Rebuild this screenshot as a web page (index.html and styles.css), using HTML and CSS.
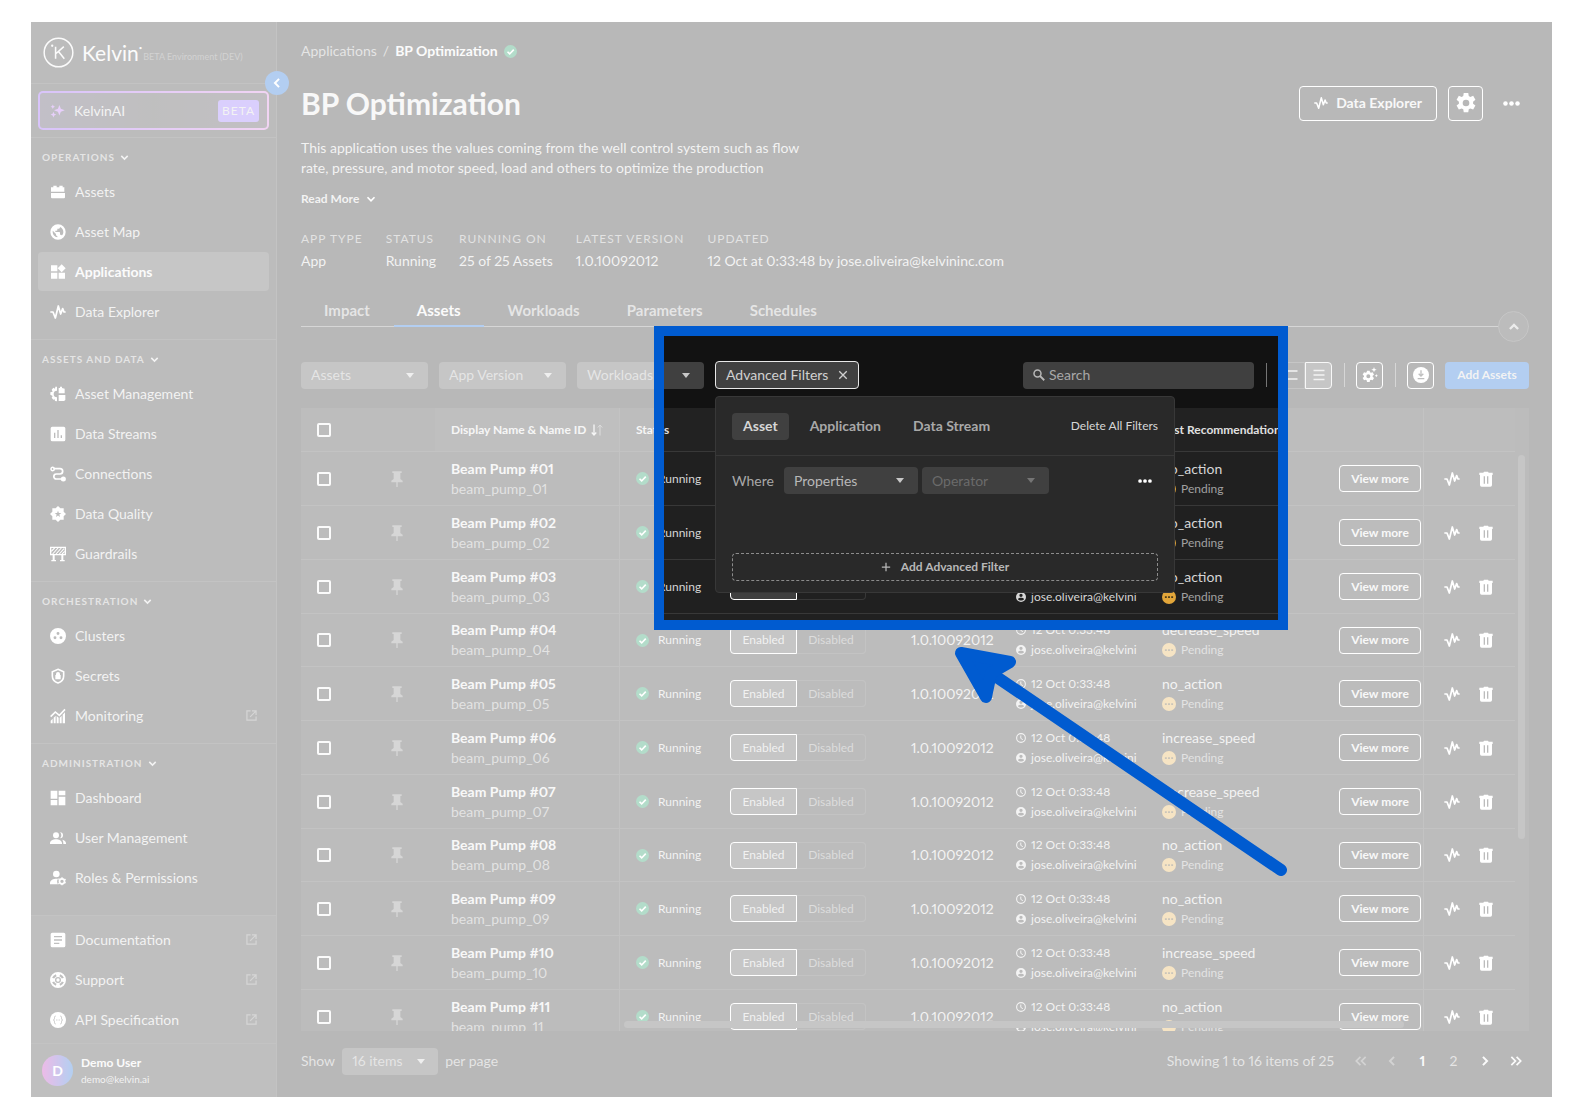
FILE: index.html
```
<!DOCTYPE html>
<html lang="en">
<head>
    <meta charset="UTF-8">
    <meta name="viewport" content="width=device-width, initial-scale=1.0">
    <link rel="stylesheet" href="styles.css">
    <title>BP Optimization - Kelvin</title>
</head>
<body>
    <!-- icon sprite -->
    <svg class="sprite" aria-hidden="true">
        <symbol id="down" viewBox="0 0 24 24"><path d="M5 8.5l7 7 7-7" fill="none" stroke="currentColor" stroke-width="3.4"/></symbol>
        <symbol id="left" viewBox="0 0 24 24"><path d="M15.5 5l-7 7 7 7" fill="none" stroke="currentColor" stroke-width="3.4"/></symbol>
        <symbol id="right" viewBox="0 0 24 24"><path d="M8.5 5l7 7-7 7" fill="none" stroke="currentColor" stroke-width="3.4"/></symbol>
        <symbol id="first" viewBox="0 0 24 24"><path d="M11 5l-7 7 7 7M20 5l-7 7 7 7" fill="none" stroke="currentColor" stroke-width="3"/></symbol>
        <symbol id="last" viewBox="0 0 24 24"><path d="M4 5l7 7-7 7M13 5l7 7-7 7" fill="none" stroke="currentColor" stroke-width="3"/></symbol>
        <symbol id="up" viewBox="0 0 24 24"><path d="M5 15.5l7-7 7 7" fill="none" stroke="currentColor" stroke-width="4"/></symbol>
        <symbol id="sparkle" viewBox="0 0 24 24"><path d="M15 3l2.3 6.200L23.500 11.500l-6.200 2.300L15 20l-2.300-6.200L6.500 11.500l6.200-2.300zM4.500 2.500l1.100 2.400L8 6 5.600 7.100 4.500 9.500 3.400 7.100 1 6l2.400-1.100zM5.500 14l1.400 3.100L10 18.500l-3.100 1.400L5.500 23l-1.400-3.100L1 18.500l3.100-1.400z"/></symbol>
        <symbol id="assets" viewBox="0 0 24 24"><path d="M3 5h2V2.500h5V5h4V2.500h5V5h2.500v6.500h-20V5zM1.500 13.500h21V20a1.500 1.500 0 0 1-1.500 1.500H3A1.500 1.500 0 0 1 1.500 20z"/></symbol>
        <symbol id="map" viewBox="0 0 24 24"><path d="M17.900,17.390C17.640,16.590 16.890,16 16,16H15V13A1,1 0 0,0 14,12H8V10H10A1,1 0 0,0 11,9V7H13A2,2 0 0,0 15,5V4.590C17.930,5.770 20,8.640 20,12C20,14.080 19.200,15.970 17.900,17.390M11,19.930C7.050,19.440 4,16.080 4,12C4,11.380 4.080,10.780 4.210,10.210L9,15V16A2,2 0 0,0 11,18M12,0.500A11.500,11.500 0 0,0 0.500,12A11.500,11.500 0 0,0 12,23.500A11.500,11.500 0 0,0 23.500,12A11.500,11.500 0 0,0 12,0.500Z"/></symbol>
        <symbol id="apps" viewBox="0 0 24 24"><path d="M1.500 2H11v9H1.500zM1.500 13H11v9H1.500zM13 13h9.500v9H13zM17.500.500l6 6-6 6-6-6z"/></symbol>
        <symbol id="pulse" viewBox="0 0 24 24"><path d="M.500 12h4L8 21 12.500 3 16 15l3-8 2 5h2.500" fill="none" stroke="currentColor" stroke-width="2.600" stroke-linejoin="round"/></symbol>
        <symbol id="manage" viewBox="0 0 24 24"><path d="M10.500 1v6a5 5 0 0 0 0 10v6l-3-.500-.500-2.500-2 .500-2.500-3 1.500-2.500L.500 13v-3.500L4 8.500 2.500 5.500l2.500-3 2.500 1.500L8 1zM13 3h2V1h3v2l4 1v7h-9zM13 13.500h10V21l-2 1.500h-8z"/></symbol>
        <symbol id="streams" viewBox="0 0 24 24"><path fill-rule="evenodd" d="M3.500 1h17A2.500 2.500 0 0 1 23 3.500v17a2.500 2.500 0 0 1-2.500 2.500h-17A2.500 2.500 0 0 1 1 20.500v-17A2.500 2.500 0 0 1 3.500 1zM6 10v8h2v-8zM11 6v12h2V6zM16 14v4h2v-4z"/></symbol>
        <symbol id="connections" viewBox="0 0 24 24"><path d="M5 4h10a4 4 0 0 1 0 8H9.500a3.500 3.500 0 0 0 0 7.500H20" fill="none" stroke="currentColor" stroke-width="2.600"/><circle cx="4" cy="4.500" r="2.500" fill="none" stroke="currentColor" stroke-width="2.200"/><circle cx="20" cy="19.500" r="3.800"/></symbol>
        <symbol id="quality" viewBox="0 0 24 24"><path fill-rule="evenodd" d="M12 0l3.500 3.500H20.500V8.500L24 12l-3.500 3.500v5h-5L12 24l-3.500-3.500h-5v-5L0 12l3.500-3.500v-5h5zM12 7l-1.300 3.500H7l3 2.200L9 16.500l3-2.200 3 2.200-1-3.800 3-2.200h-3.700z"/></symbol>
        <symbol id="guard" viewBox="0 0 24 24"><path d="M1 2h22v11H1z" fill="none" stroke="currentColor" stroke-width="2"/><path d="M4 12L12 3M9 12l8-9M14 12l7-8M2 8l5-5M18 12l4-4" fill="none" stroke="currentColor" stroke-width="1.600"/><path d="M4 13h3v8h2v2H2v-2h2zM17 13h3v8h2v2h-7v-2h2z"/></symbol>
        <symbol id="clusters" viewBox="0 0 24 24"><path fill-rule="evenodd" d="M12 0a12 12 0 1 0 0 24 12 12 0 0 0 0-24zM12 6a2.200 2.200 0 1 1 0 4.400A2.200 2.200 0 0 1 12 6zM7.500 12.500a2.200 2.200 0 1 1 0 4.400 2.200 2.200 0 0 1 0-4.400zM16.500 12.500a2.200 2.200 0 1 1 0 4.400 2.200 2.200 0 0 1 0-4.400z"/></symbol>
        <symbol id="secrets" viewBox="0 0 24 24"><path d="M12 2l8.500 3.500V12c0 5-4 9-8.500 10.500C7.500 21 3.500 17 3.500 12V5.500z" fill="none" stroke="currentColor" stroke-width="2.400"/><path d="M8 10.500h1V9a3 3 0 0 1 6 0v1.500h1V17H8z"/></symbol>
        <symbol id="monitoring" viewBox="0 0 24 24"><path d="M1 13l7-7 6 5 8.500-9" fill="none" stroke="currentColor" stroke-width="2.400"/><path d="M1 19l3-3v7H1zM5.500 14.500l3-3V23h-3zM10 12l3 2.500V23h-3zM14.500 14.500l3-3V23h-3zM19 10l3.500-3.500V23H19z"/></symbol>
        <symbol id="ext" viewBox="0 0 24 24"><path d="M10 2H2v20h20v-8M13 2h9v9M21 3L9 15" fill="none" stroke="currentColor" stroke-width="2.600"/></symbol>
        <symbol id="dashboard" viewBox="0 0 24 24"><path d="M1 1h10v12H1zM1 15h10v8H1zM13 1h10v7H13zM13 10h10v13H13z"/></symbol>
        <symbol id="users" viewBox="0 0 24 24"><circle cx="9" cy="8" r="4.500"/><path d="M0 20c0-4 5-6 9-6s9 2 9 6v1H0zM15 3.500a4.500 4.500 0 0 1 0 9 6 6 0 0 0 0-9zM18.500 14.500c3 .500 5.500 2.500 5.500 5.500v1h-4v-1c0-2-.500-4-1.500-5.500z"/></symbol>
        <symbol id="roles" viewBox="0 0 24 24"><circle cx="9.500" cy="6" r="5"/><path d="M0 20c0-5 5-7 10-7 1 0 1.500 0 2 .200-2 3-1.500 6 0 8.300H0z"/><circle cx="18" cy="17" r="3.800" fill="none" stroke="currentColor" stroke-width="2.600"/><path d="M17 11h2v2h-2zM17 21h2v2h-2zM12 14l1-1.700 1.700 1-1 1.700zM21.300 19.300l1-1.700 1.700 1-1 1.700zM12 20l1.700-1 1 1.700-1.700 1zM21.300 14l1.700-1 1 1.700-1.700 1z"/></symbol>
        <symbol id="docs" viewBox="0 0 24 24"><path fill-rule="evenodd" d="M3.500 1h17A2.500 2.500 0 0 1 23 3.500v17a2.500 2.500 0 0 1-2.500 2.500h-17A2.500 2.500 0 0 1 1 20.500v-17A2.500 2.500 0 0 1 3.500 1zM6 6v2h12V6zM6 11v2h12v-2zM6 16v2h8v-2z"/></symbol>
        <symbol id="support" viewBox="0 0 24 24"><path fill-rule="evenodd" d="M12 0a12 12 0 1 0 0 24 12 12 0 0 0 0-24zM12 7.500a4.500 4.500 0 1 1 0 9 4.500 4.500 0 0 1 0-9zM8.600 3.200l1.300 3A6.500 6.500 0 0 0 6.200 9.900l-3-1.300a9.500 9.500 0 0 1 5.400-5.400zM15.400 3.200a9.500 9.500 0 0 1 5.400 5.400l-3 1.300a6.500 6.500 0 0 0-3.700-3.700zM3.200 15.400l3-1.300a6.500 6.500 0 0 0 3.700 3.700l-1.300 3a9.500 9.500 0 0 1-5.400-5.400zM17.800 14.100l3 1.300a9.500 9.500 0 0 1-5.400 5.400l-1.300-3a6.500 6.500 0 0 0 3.700-3.700z"/><circle cx="12" cy="12" r="2.500"/></symbol>
        <symbol id="api" viewBox="0 0 24 24"><circle cx="12" cy="12" r="12"/><path d="M8.500 6C6 6 7 10 6.500 11L5 12l1.500 1c.500 1-.500 5 2 5M15.500 6c2.500 0 1.500 4 2 5l1.500 1-1.500 1c-.500 1 .500 5-2 5M9 12h1.200M11.400 12h1.200M13.800 12H15" fill="none" stroke="#2b2b2b" stroke-width="1.300"/></symbol>
        <symbol id="check" viewBox="0 0 24 24"><circle cx="12" cy="12" r="12" fill="#038b4d"/><path d="M6.500 12.500l4 4 7.500-8" fill="none" stroke="#fff" stroke-width="3"/></symbol>
        <symbol id="cog" viewBox="0 0 24 24"><path fill-rule="evenodd" d="M9.300 0h5.400l.600 3.600 1.900 1.100 3.400-1.300 2.700 4.700-2.800 2.300v2.400l2.800 2.300-2.700 4.700-3.400-1.300-1.900 1.100-.600 3.600H9.300l-.600-3.600-1.900-1.100-3.400 1.300L.700 15.100l2.800-2.300v-2.400L.700 8.100l2.700-4.700 3.400 1.300 1.900-1.100zM12 8a4 4 0 1 0 0 8 4 4 0 0 0 0-8z"/></symbol>
        <symbol id="cogplus" viewBox="0 0 24 24"><path fill-rule="evenodd" d="M7.500 5.500h4l.500 2.500 1.500.800 2.500-.800 2 3.500-2 1.700v1.600l2 1.700-2 3.500-2.500-.800-1.500.800-.500 2.500h-4L7 20l-1.500-.800L3 20l-2-3.500 2-1.700v-1.600l-2-1.700L3 8l2.500.800L7 8zM9.500 11a3 3 0 1 0 0 6 3 3 0 0 0 0-6zM18 0l1.100 2.900L22 4l-2.900 1.100L18 8l-1.100-2.900L14 4l2.900-1.100zM21.500 10.500l.800 1.700 1.700.800-1.700.800-.800 1.700-.800-1.700L19 13l1.700-.800z"/></symbol>
        <symbol id="download" viewBox="0 0 24 24"><circle cx="12" cy="12" r="12"/><path d="M12 5v8M8.500 10l3.500 3.500L15.500 10M7 17.500h10" fill="none" stroke="#2b2b2b" stroke-width="2"/></symbol>
        <symbol id="dots" viewBox="0 0 24 24"><circle cx="3.500" cy="12" r="3.200"/><circle cx="12" cy="12" r="3.200"/><circle cx="20.500" cy="12" r="3.200"/></symbol>
        <symbol id="close" viewBox="0 0 24 24"><path d="M3 3l18 18M21 3L3 21" fill="none" stroke="currentColor" stroke-width="3.200"/></symbol>
        <symbol id="plus" viewBox="0 0 24 24"><path d="M12 2v20M2 12h20" fill="none" stroke="currentColor" stroke-width="3"/></symbol>
        <symbol id="search" viewBox="0 0 24 24"><circle cx="9" cy="9" r="7" fill="none" stroke="currentColor" stroke-width="3"/><path d="M14 14l8.500 8.500" fill="none" stroke="currentColor" stroke-width="3.600"/></symbol>
        <symbol id="rows2" viewBox="0 0 24 24"><path d="M1 4h22M1 20h22" fill="none" stroke="currentColor" stroke-width="3"/></symbol>
        <symbol id="rows3" viewBox="0 0 24 24"><path d="M1 3h22M1 12h22M1 21h22" fill="none" stroke="currentColor" stroke-width="2.600"/></symbol>
        <symbol id="sort" viewBox="0 0 24 24"><path d="M6 1v20M1.500 17L6 22l4.500-5" fill="none" stroke="currentColor" stroke-width="2.600"/><path d="M18 23V3M13.500 7L18 2l4.500 5" fill="none" stroke="#8a8a8a" stroke-width="2"/></symbol>
        <symbol id="pin" viewBox="0 0 24 24"><path d="M17 12V3h2V.500H5V3h2v9l-3.500 2.500V17H11v7h2v-7h7.500v-2.500z"/></symbol>
        <symbol id="clock" viewBox="0 0 24 24"><circle cx="12" cy="12" r="10.500" fill="none" stroke="currentColor" stroke-width="2.600"/><path d="M11.500 6v7l5 3" fill="none" stroke="currentColor" stroke-width="2.400"/></symbol>
        <symbol id="person" viewBox="0 0 24 24"><path fill-rule="evenodd" d="M12 0a12 12 0 1 0 0 24 12 12 0 0 0 0-24zM12 4a4 4 0 1 1 0 8 4 4 0 0 1 0-8zM4.500 16.500c1-2 5-3 7.500-3s6.500 1 7.500 3c-3 5.500-12 5.500-15 0z"/></symbol>
        <symbol id="pending" viewBox="0 0 24 24"><circle cx="12" cy="12" r="12" fill="#e2a63a"/><path d="M5 10.500h3.200v3H5zM10.400 10.500h3.200v3h-3.200zM15.800 10.500H19v3h-3.200z" fill="#4a3a1a"/></symbol>
        <symbol id="trash" viewBox="0 0 24 24"><path fill-rule="evenodd" d="M2 2.500h6L9 1h6l1 1.500h6V6h-1v15a2.500 2.500 0 0 1-2.500 2.500h-13A2.500 2.500 0 0 1 3 21V6H2zM8.500 8v11h2V8zM13.500 8v11h2V8z"/></symbol>
        <symbol id="logo" viewBox="0 0 32 32"><circle cx="16" cy="16" r="14.800" fill="none" stroke="currentColor" stroke-width="1.500"/><path d="M13 10v12.500M21.500 10L13.500 17M16 15l6 7.500" fill="none" stroke="currentColor" stroke-width="1.600"/><circle cx="9.500" cy="9" r="1.200"/></symbol>
    </svg>

    <div class="app">
        <aside class="sidebar">
            <div class="brand">
                <svg class="logo"><use href="#logo"/></svg>
                <span class="brand-name">Kelvin<sup>•</sup></span>
                <span class="env">BETA Environment (DEV)</span>
                <button class="collapse" aria-label="Collapse menu"><svg><use href="#left"/></svg></button>
            </div>
            <div class="ai">
                <button class="ai-btn"><svg><use href="#sparkle"/></svg><span>KelvinAI</span><span class="beta">BETA</span></button>
            </div>
            <nav class="group">
                <h2>Operations <svg><use href="#down"/></svg></h2>
                <a class="item" href="#"><svg><use href="#assets"/></svg>Assets</a>
                <a class="item" href="#"><svg><use href="#map"/></svg>Asset Map</a>
                <a class="item active" href="#"><svg><use href="#apps"/></svg>Applications</a>
                <a class="item" href="#"><svg><use href="#pulse"/></svg>Data Explorer</a>
            </nav>
            <nav class="group">
                <h2>Assets and Data <svg><use href="#down"/></svg></h2>
                <a class="item" href="#"><svg><use href="#manage"/></svg>Asset Management</a>
                <a class="item" href="#"><svg><use href="#streams"/></svg>Data Streams</a>
                <a class="item" href="#"><svg><use href="#connections"/></svg>Connections</a>
                <a class="item" href="#"><svg><use href="#quality"/></svg>Data Quality</a>
                <a class="item" href="#"><svg><use href="#guard"/></svg>Guardrails</a>
            </nav>
            <nav class="group">
                <h2>Orchestration <svg><use href="#down"/></svg></h2>
                <a class="item" href="#"><svg><use href="#clusters"/></svg>Clusters</a>
                <a class="item" href="#"><svg><use href="#secrets"/></svg>Secrets</a>
                <a class="item" href="#"><svg><use href="#monitoring"/></svg>Monitoring<svg class="ext"><use href="#ext"/></svg></a>
            </nav>
            <nav class="group grow">
                <h2>Administration <svg><use href="#down"/></svg></h2>
                <a class="item" href="#"><svg><use href="#dashboard"/></svg>Dashboard</a>
                <a class="item" href="#"><svg><use href="#users"/></svg>User Management</a>
                <a class="item" href="#"><svg><use href="#roles"/></svg>Roles &amp; Permissions</a>
            </nav>
            <nav class="links">
                <a class="item" href="#"><svg><use href="#docs"/></svg>Documentation<svg class="ext"><use href="#ext"/></svg></a>
                <a class="item" href="#"><svg><use href="#support"/></svg>Support<svg class="ext"><use href="#ext"/></svg></a>
                <a class="item" href="#"><svg><use href="#api"/></svg>API Specification<svg class="ext"><use href="#ext"/></svg></a>
            </nav>
            <div class="user">
                <span class="avatar">D</span>
                <div><p class="user-name">Demo User</p><p class="user-mail">demo@kelvin.ai</p></div>
            </div>
        </aside>

        <main class="main">
            <div class="crumbs"><a href="#">Applications</a><span>/</span><b>BP Optimization</b><svg><use href="#check"/></svg></div>
            <header class="head">
                <h1>BP Optimization</h1>
                <div class="head-actions">
                    <button class="outline explorer"><svg><use href="#pulse"/></svg>Data Explorer</button>
                    <button class="outline gear" aria-label="Settings"><svg><use href="#cog"/></svg></button>
                    <button class="plain more" aria-label="More"><svg><use href="#dots"/></svg></button>
                </div>
            </header>
            <p class="desc">This application uses the values coming from the well control system such as flow rate, pressure, and motor speed, load and others to optimize the production</p>
            <button class="plain read-more">Read More <svg><use href="#down"/></svg></button>
            <dl class="facts">
                <div><dt>App Type</dt><dd>App</dd></div>
                <div><dt>Status</dt><dd>Running</dd></div>
                <div><dt>Running On</dt><dd>25 of 25 Assets</dd></div>
                <div><dt>Latest Version</dt><dd>1.0.10092012</dd></div>
                <div><dt>Updated</dt><dd>12 Oct at 0:33:48 by jose.oliveira@kelvininc.com</dd></div>
            </dl>
            <div class="tabs">
                <button>Impact</button><button class="active">Assets</button><button>Workloads</button><button>Parameters</button><button>Schedules</button>
                <button class="fold" aria-label="Collapse header"><svg><use href="#up"/></svg></button>
            </div>

            <div class="toolbar">
                <span class="select"><select aria-label="Assets"><option>Assets</option></select></span>
                <span class="select"><select aria-label="App Version"><option>App Version</option></select></span>
                <span class="select"><select aria-label="Workloads"><option>Workloads</option></select></span>
                <div class="advanced">
                    <button class="adv-btn">Advanced Filters <svg><use href="#close"/></svg></button>
                    <div class="popover">
                        <div class="pop-head">
                            <button class="pill active">Asset</button><button class="pill">Application</button><button class="pill">Data Stream</button>
                            <button class="plain delete">Delete All Filters</button>
                        </div>
                        <div class="pop-body">
                            <div class="where">
                                <label for="prop">Where</label>
                                <span class="select prop"><select id="prop"><option>Properties</option></select></span>
                                <span class="select off"><select aria-label="Operator" disabled><option>Operator</option></select></span>
                                <button class="plain row-more" aria-label="Filter options"><svg><use href="#dots"/></svg></button>
                            </div>
                            <button class="add-filter"><svg><use href="#plus"/></svg>Add Advanced Filter</button>
                        </div>
                    </div>
                </div>
                <label class="search"><svg><use href="#search"/></svg><input type="text" placeholder="Search" aria-label="Search"></label>
                <i class="sep"></i>
                <div class="density"><button aria-label="Comfortable"><svg><use href="#rows2"/></svg></button><button class="on" aria-label="Compact"><svg><use href="#rows3"/></svg></button></div>
                <i class="sep"></i>
                <button class="outline tool" aria-label="Table settings"><svg><use href="#cogplus"/></svg></button>
                <i class="sep"></i>
                <button class="outline tool" aria-label="Download"><svg><use href="#download"/></svg></button>
                <button class="primary">Add Assets</button>
            </div>

            <div class="table-wrap">
                <table>
                    <thead>
                        <tr>
                            <th class="c-check"><input type="checkbox" aria-label="Select all"></th>
                            <th class="c-pin"></th>
                            <th class="c-name">Display Name &amp; Name ID <svg><use href="#sort"/></svg></th>
                            <th class="c-status">Status</th>
                            <th class="c-state"></th>
                            <th class="c-version"></th>
                            <th class="c-updated"></th>
                            <th class="c-rec">Last Recommendation</th>
                            <th class="c-view"></th>
                            <th class="c-act"></th>
                        </tr>
                    </thead>
                    <tbody id="rows"></tbody>
                </table>
                <i class="bar-v"></i><i class="bar-h"></i>
            </div>

            <footer class="pager">
                <label for="size">Show</label>
                <span class="select size"><select id="size"><option>16 items</option></select></span>
                <span>per page</span>
                <span class="count">Showing 1 to 16 items of 25</span>
                <div class="pages">
                    <button class="dim" aria-label="First page"><svg><use href="#first"/></svg></button>
                    <button class="dim" aria-label="Previous page"><svg><use href="#left"/></svg></button>
                    <button class="on">1</button>
                    <button>2</button>
                    <button class="on" aria-label="Next page"><svg><use href="#right"/></svg></button>
                    <button class="on" aria-label="Last page"><svg><use href="#last"/></svg></button>
                </div>
            </footer>
        </main>

        <!-- highlight: everything outside the frame is washed out -->
        <div class="spotlight"></div>
        <svg class="arrow" viewBox="0 0 340 236" aria-hidden="true">
            <path d="M32 22L331 225" fill="none" stroke="#005bd0" stroke-width="12" stroke-linecap="round"/>
            <path d="M11 8L60 17 41 28 36 52z" fill="#005bd0" stroke="#005bd0" stroke-width="12" stroke-linejoin="round"/>
        </svg>
    </div>

    <script>
        const actions = ["no_action", "no_action", "no_action", "decrease_speed", "no_action", "increase_speed", "decrease_speed", "no_action", "no_action", "increase_speed", "no_action"];
        const icon = (name, cls = "") => `<svg class="${cls}"><use href="#${name}"/></svg>`;
        document.getElementById("rows").innerHTML = actions.map((action, i) => {
            const n = String(i + 1).padStart(2, "0");
            return `<tr>
                <td class="c-check"><input type="checkbox" aria-label="Select Beam Pump #${n}"></td>
                <td class="c-pin">${icon("pin")}</td>
                <td class="c-name"><b>Beam Pump #${n}</b><span>beam_pump_${n}</span></td>
                <td class="c-status"><div>${icon("check")}Running</div></td>
                <td class="c-state"><div class="toggle"><button class="on">Enabled</button><button>Disabled</button></div></td>
                <td class="c-version">1.0.10092012</td>
                <td class="c-updated"><div>${icon("clock")}12 Oct 0:33:48</div><div>${icon("person")}jose.oliveira@kelvini</div></td>
                <td class="c-rec"><span>${action}</span><div>${icon("pending")}Pending</div></td>
                <td class="c-view"><button class="outline">View more</button></td>
                <td class="c-act"><div><button class="plain" aria-label="Open in Data Explorer">${icon("pulse")}</button><button class="plain" aria-label="Delete">${icon("trash")}</button></div></td>
            </tr>`;
        }).join("");
    </script>
</body>
</html>
```
FILE: styles.css
```
*{ box-sizing: border-box; }
body{ margin: 0; height: 100vh; min-height: 1120px; padding: 22px 32px 23px 31px; background: #fff; color: #d6d6d6; font-family: Lato, "Open Sans", sans-serif; font-size: 14px; line-height: 20px; font-variant-numeric: proportional-nums; }
h1, h2, p, dl, dd{ margin: 0; }
a{ color: inherit; text-decoration: none; }
button, input, select{ font: inherit; color: inherit; margin: 0; }
button{ padding: 0; border: 0; background: none; }
svg{ display: block; flex: none; fill: currentColor; }
.sprite{ position: absolute; width: 0; height: 0; }
.app{ position: relative; overflow: hidden; display: flex; height: 100%; background: #121212; }

/* sidebar */
.sidebar{ display: flex; flex-direction: column; flex: none; width: 246px; background: #202020; border-right: 1px solid #383838; }
.brand{ position: relative; display: flex; align-items: center; height: 61px; padding-left: 12px; color: #f2f2f2; }
.logo{ width: 31px; height: 31px; }
.brand-name{ margin-left: 8px; font-size: 21px; line-height: 24px; }
.brand-name sup{ font-size: 6px; line-height: 0; vertical-align: 11px; }
.env{ margin-left: 1px; padding-top: 8px; font-size: 9px; line-height: 12px; color: #6b6b6b; white-space: nowrap; }
.collapse{ position: absolute; z-index: 2; right: -13px; bottom: -12px; width: 24px; height: 24px; border-radius: 50%; background: #005bd0; color: #fff; }
.collapse svg{ width: 14px; height: 14px; margin: auto; }
.ai{ padding: 7px; border-top: 1px solid #383838; }
.ai-btn{ display: flex; align-items: center; width: 231px; height: 39px; padding: 0 8px 0 10px; border: 2px solid transparent; border-radius: 5px; background: linear-gradient(90deg, #322a45, #2b2b2b 50%, #322a38) padding-box, linear-gradient(90deg, #7d3aed, #d070d8) border-box; }
.ai-btn svg{ width: 15px; height: 15px; color: #b060f0; margin-right: 9px; }
.beta{ margin-left: auto; width: 41px; border-radius: 3px; background: #845ff8; font-size: 12px; line-height: 22px; letter-spacing: 1px; }
.group{ padding: 11px 7px 7px; border-top: 1px solid #383838; }
.grow{ flex: 1; }
.group h2{ display: flex; align-items: center; gap: 4px; height: 16px; margin: 0 0 7px 4px; font-size: 10px; line-height: 16px; font-weight: 700; letter-spacing: 1px; text-transform: uppercase; color: #a8a8a8; }
.group h2 svg{ width: 11px; height: 11px; color: #d6d6d6; }
.item{ display: flex; align-items: center; gap: 9px; height: 39px; margin-bottom: 1px; padding: 0 12px; border-radius: 4px; }
.item svg{ width: 16px; height: 16px; color: #fff; }
.item .ext{ width: 11px; height: 11px; margin-left: auto; color: #757575; }
.item.active{ background: #404040; color: #f2f2f2; font-weight: 700; }
.links{ padding: 4px 7px 3px; border-top: 1px solid #383838; background: #2b2b2b; }
.user{ display: flex; align-items: center; gap: 8px; height: 54px; padding-left: 11px; border-top: 1px solid #383838; background: #2b2b2b; }
.avatar{ width: 31px; height: 31px; border-radius: 50%; background: linear-gradient(90deg, #c01cb0, #0060d0); color: #fff; font-weight: 700; line-height: 31px; text-align: center; }
.user-name{ font-size: 12px; line-height: 17px; font-weight: 700; color: #f2f2f2; }
.user-mail{ font-size: 10px; line-height: 16px; }

/* page head */
.main{ display: flex; flex-direction: column; flex: 1; min-width: 0; padding: 0 23px 0 24px; }
.crumbs{ display: flex; align-items: center; gap: 6px; margin-top: 19px; color: #a8a8a8; }
.crumbs b{ color: #f2f2f2; }
.crumbs svg{ width: 13px; height: 13px; }
.head{ display: flex; align-items: center; justify-content: space-between; height: 36px; margin-top: 24px; }
h1{ font-size: 30px; line-height: 36px; font-weight: 700; color: #e8e8e8; }
.head-actions{ display: flex; align-items: center; gap: 11px; }
.outline{ display: flex; align-items: center; justify-content: center; border: 1px solid #fff; border-radius: 4px; color: #e8e8e8; font-weight: 700; }
.outline svg{ color: #fff; }
.explorer{ gap: 8px; width: 138px; height: 35px; }
.explorer svg{ width: 14px; height: 14px; }
.gear{ width: 35px; height: 35px; }
.gear svg{ width: 20px; height: 20px; }
.more{ padding: 0 9px; }
.more svg{ width: 17px; height: 17px; color: #fff; }
.desc{ max-width: 500px; margin-top: 17px; }
.read-more{ display: flex; align-items: center; gap: 6px; height: 20px; margin-top: 11px; font-size: 12px; font-weight: 700; }
.read-more svg{ width: 12px; height: 12px; color: #fff; }
.facts{ display: flex; gap: 23px; margin-top: 21px; }
.facts dt{ font-size: 12px; line-height: 18px; letter-spacing: 1px; text-transform: uppercase; color: #a0a0a0; }
.facts dd{ margin-top: 3px; }
.tabs{ position: relative; display: flex; gap: 1px; height: 35px; margin-top: 21px; border-bottom: 1px solid #757575; }
.tabs button{ padding: 2px 23px 0; height: 35px; border-bottom: 2px solid transparent; font-size: 15px; font-weight: 700; color: #a8a8a8; }
.tabs .active{ border-color: #005bd0; color: #f2f2f2; }
.tabs .fold{ position: absolute; right: 0; bottom: -16px; width: 31px; height: 31px; padding: 0; border: 1px solid #404040; border-radius: 50%; background: #202020; }
.fold svg{ width: 14px; height: 14px; margin: auto; color: #c0c0c0; }

/* toolbar */
.toolbar{ display: flex; align-items: center; gap: 11px; margin-top: 34px; }
.select{ position: relative; width: 127px; }
.select::after{ content: ""; position: absolute; right: 14px; top: 11px; border: 4px solid transparent; border-top: 5px solid #c8c8c8; border-bottom: 0; pointer-events: none; }
select{ display: block; appearance: none; width: 100%; height: 27px; padding: 0 10px; border: 0; border-radius: 4px; background: #404040; color: #a8a8a8; }
.advanced{ position: relative; }
.adv-btn{ display: flex; align-items: center; justify-content: space-between; width: 144px; height: 28px; padding: 0 10px; border: 1px solid #e8e8e8; border-radius: 4px; background: #404040; color: #d0d0d0; white-space: nowrap; }
.adv-btn svg{ width: 10px; height: 10px; }
.search{ display: flex; align-items: center; gap: 4px; width: 231px; height: 27px; margin-left: auto; padding: 0 10px; border-radius: 4px; background: #404040; color: #b8b8b8; }
.search svg{ width: 12px; height: 12px; }
.search input{ width: 100%; min-width: 0; padding: 0; border: 0; background: none; outline: 0; }
.search input::placeholder{ color: #a8a8a8; }
.sep{ width: 1px; height: 24px; margin-left: 1px; background: #757575; }
.density{ display: flex; }
.density button{ width: 27px; height: 27px; border: 1px solid #404040; border-radius: 4px 0 0 4px; }
.density .on{ border: 1px solid #e8e8e8; border-radius: 0 4px 4px 0; background: #404040; }
.density svg{ width: 12px; height: 12px; margin: auto; }
.tool{ width: 27px; height: 27px; }
.tool svg{ width: 16px; height: 16px; }
.primary{ width: 84px; height: 27px; border-radius: 4px; background: #005bd0; font-size: 12px; font-weight: 700; }

/* advanced filter popover */
.popover{ position: absolute; z-index: 3; top: 35px; left: 0; width: 460px; border: 1px solid #383838; border-radius: 4px; background: #292929; }
.pop-head{ display: flex; align-items: center; height: 59px; padding: 0 16px; border-bottom: 1px solid #383838; }
.pill{ height: 27px; margin-right: 10px; padding: 0 11px; border-radius: 4px; font-weight: 700; color: #a8a8a8; }
.pill.active{ background: #404040; color: #d6d6d6; }
.delete{ margin-left: auto; font-size: 12px; }
.pop-body{ padding: 11px 16px; }
.where{ display: flex; align-items: center; height: 27px; }
.where label{ width: 52px; color: #a8a8a8; }
.prop{ width: 134px; margin-right: 4px; }
.prop select{ color: #b8b8b8; }
.off::after{ border-top-color: #757575; }
.off select{ color: #6b6b6b; opacity: 1; }
.row-more{ margin-left: auto; margin-right: 6px; }
.row-more svg{ width: 14px; height: 14px; color: #fff; }
.add-filter{ display: flex; align-items: center; justify-content: center; gap: 10px; width: 100%; height: 28px; margin-top: 59px; border: 1px dashed #8c8c8c; border-radius: 4px; font-size: 12px; font-weight: 700; color: #b8b8b8; }
.add-filter svg{ width: 10px; height: 10px; }

/* table */
.table-wrap{ position: relative; flex: 1; min-height: 0; margin-top: 19px; padding-right: 14px; overflow: hidden; background: #202020; }
table{ width: 100%; table-layout: fixed; border-collapse: separate; border-spacing: 0; }
th, td{ padding: 0 0 0 16px; border-bottom: 1px solid #383838; text-align: left; white-space: nowrap; }
th{ height: 44px; background: #222; color: #e0e0e0; font-size: 12px; }
td{ height: 54px; }
tr:nth-child(4n) td{ height: 53px; }
th svg{ display: inline-block; width: 12px; height: 12px; margin-left: 2px; vertical-align: -2px; }
input[type="checkbox"]{ display: block; appearance: none; width: 14px; height: 14px; border: 2px solid #f2f2f2; border-radius: 2px; }
.c-check{ width: 58px; }
.c-pin{ width: 76px; }
td.c-pin svg{ width: 16px; height: 16px; margin-left: 14px; color: #757575; }
.c-name{ width: 185px; border-right: 1px solid #383838; }
th.c-name{ background: #2b2b2b; }
.c-name b, .c-name span{ display: block; }
.c-name b{ color: #e8e8e8; }
.c-name span{ color: #a0a0a0; }
.c-status{ width: 94px; font-size: 12px; }
.c-status div{ display: flex; align-items: center; gap: 9px; }
.c-status div svg{ width: 13px; height: 13px; }
.c-state{ width: 181px; }
.toggle{ display: flex; font-size: 12px; }
.toggle button{ width: 69px; height: 27px; border: 1px solid #383838; border-left: 0; border-radius: 0 4px 4px 0; color: #8c8c8c; }
.toggle .on{ width: 67px; border: 1px solid #fff; border-radius: 4px 0 0 4px; background: #404040; color: #d0d0d0; }
.c-version{ width: 105px; }
.c-updated{ width: 146px; font-size: 12px; }
.c-updated div{ display: flex; align-items: center; gap: 5px; }
.c-updated svg{ width: 10px; height: 10px; }
.c-rec span{ display: block; }
.c-rec div{ display: flex; align-items: center; gap: 5px; font-size: 12px; color: #a0a0a0; }
.c-rec svg{ width: 14px; height: 14px; }
.c-view{ width: 101px; border-right: 1px solid #383838; }
.c-view button{ width: 82px; height: 27px; font-size: 12px; }
.c-act{ width: 91px; padding-left: 20px; }
.c-act div{ display: flex; gap: 18px; }
.c-act svg{ width: 16px; height: 16px; color: #fff; }
.bar-v{ position: absolute; right: 4px; top: 47px; width: 7px; height: 384px; border-radius: 4px; background: #404040; }
.bar-h{ position: absolute; left: 323px; right: 125px; bottom: 3px; height: 7px; border-radius: 4px; background: #404040; }

/* pager */
.pager{ display: flex; align-items: center; gap: 7px; height: 66px; padding-bottom: 6px; color: #a8a8a8; }
.size{ width: 96px; }
.size::after{ right: 13px; }
.count{ margin-left: auto; }
.pages{ display: flex; margin-left: 4px; }
.pages button{ width: 31px; height: 20px; }
.pages button:last-child{ margin-right: -2px; }
.pages svg{ width: 14px; height: 14px; margin: auto; }
.pages .dim{ color: #6b6b6b; }
.pages .on{ color: #f2f2f2; font-weight: 700; }

/* annotation */
.spotlight{ position: absolute; z-index: 5; left: 623px; top: 304px; width: 634px; height: 304px; border: 10px solid #005bd0; box-shadow: 0 0 0 2000px rgba(255, 255, 255, 0.7); pointer-events: none; }
.arrow{ position: absolute; z-index: 6; left: 919px; top: 623px; width: 340px; height: 236px; pointer-events: none; }
```
